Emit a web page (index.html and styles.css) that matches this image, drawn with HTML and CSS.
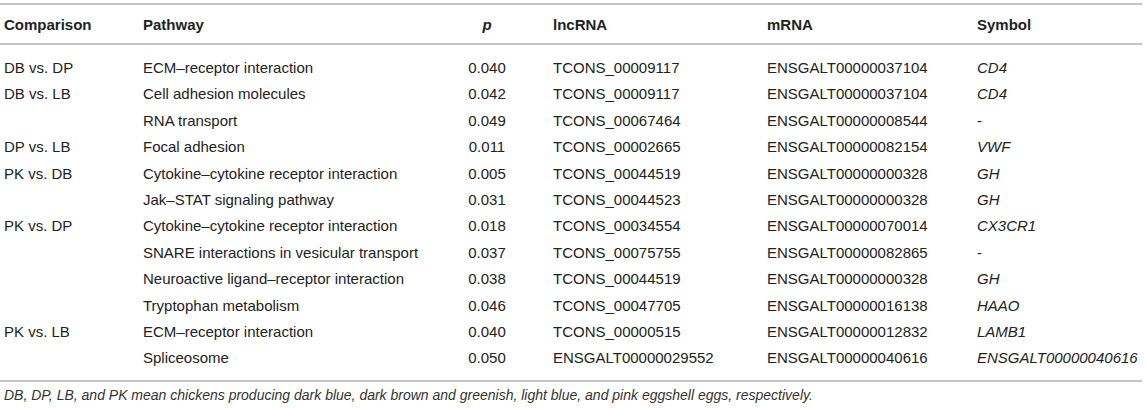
FILE: index.html
```html
<!DOCTYPE html>
<html>
<head>
<meta charset="utf-8">
<link rel="stylesheet" href="styles.css">
</head>
<body>
<div class="page">
<table class="data">
<colgroup>
<col class="c1"><col class="c2"><col class="c3"><col class="c4"><col class="c5"><col class="c6">
</colgroup>
<thead>
<tr><th class="first">Comparison</th><th>Pathway</th><th class="num"><i>p</i></th><th>lncRNA</th><th>mRNA</th><th>Symbol</th></tr>
</thead>
<tbody>
<tr class="top"><td class="first">DB vs. DP</td><td>ECM–receptor interaction</td><td class="num">0.040</td><td>TCONS_00009117</td><td>ENSGALT00000037104</td><td class="sym">CD4</td></tr>
<tr><td class="first">DB vs. LB</td><td>Cell adhesion molecules</td><td class="num">0.042</td><td>TCONS_00009117</td><td>ENSGALT00000037104</td><td class="sym">CD4</td></tr>
<tr><td class="first"></td><td>RNA transport</td><td class="num">0.049</td><td>TCONS_00067464</td><td>ENSGALT00000008544</td><td>-</td></tr>
<tr><td class="first">DP vs. LB</td><td>Focal adhesion</td><td class="num">0.011</td><td>TCONS_00002665</td><td>ENSGALT00000082154</td><td class="sym">VWF</td></tr>
<tr><td class="first">PK vs. DB</td><td>Cytokine–cytokine receptor interaction</td><td class="num">0.005</td><td>TCONS_00044519</td><td>ENSGALT00000000328</td><td class="sym">GH</td></tr>
<tr><td class="first"></td><td>Jak–STAT signaling pathway</td><td class="num">0.031</td><td>TCONS_00044523</td><td>ENSGALT00000000328</td><td class="sym">GH</td></tr>
<tr><td class="first">PK vs. DP</td><td>Cytokine–cytokine receptor interaction</td><td class="num">0.018</td><td>TCONS_00034554</td><td>ENSGALT00000070014</td><td class="sym">CX3CR1</td></tr>
<tr><td class="first"></td><td>SNARE interactions in vesicular transport</td><td class="num">0.037</td><td>TCONS_00075755</td><td>ENSGALT00000082865</td><td>-</td></tr>
<tr><td class="first"></td><td>Neuroactive ligand–receptor interaction</td><td class="num">0.038</td><td>TCONS_00044519</td><td>ENSGALT00000000328</td><td class="sym">GH</td></tr>
<tr><td class="first"></td><td>Tryptophan metabolism</td><td class="num">0.046</td><td>TCONS_00047705</td><td>ENSGALT00000016138</td><td class="sym">HAAO</td></tr>
<tr><td class="first">PK vs. LB</td><td>ECM–receptor interaction</td><td class="num">0.040</td><td>TCONS_00000515</td><td>ENSGALT00000012832</td><td class="sym">LAMB1</td></tr>
<tr class="bottom"><td class="first"></td><td>Spliceosome</td><td class="num">0.050</td><td>ENSGALT00000029552</td><td>ENSGALT00000040616</td><td class="sym">ENSGALT00000040616</td></tr>
</tbody>
</table>
<p class="note">DB, DP, LB, and PK mean chickens producing dark blue, dark brown and greenish, light blue, and pink eggshell eggs, respectively.</p>
</div>
</body>
</html>
```

FILE: styles.css
```css
html, body {
  margin: 0;
  padding: 0;
  background: #ffffff;
}
.page {
  padding-top: 3px;
  font-family: "Liberation Sans", Arial, sans-serif;
  color: #222222;
}
.data {
  width: 1142px;
  table-layout: fixed;
  border-collapse: collapse;
  font-size: 15px;
  border-top: 2px solid #c4c4c4;
  border-bottom: 2px solid #c4c4c4;
}
.c1 { width: 143px; }
.c2 { width: 278px; }
.c3 { width: 132px; }
.c4 { width: 214px; }
.c5 { width: 210px; }
.c6 { width: 165px; }
.data th, .data td {
  padding: 0;
  text-align: left;
  white-space: nowrap;
  vertical-align: middle;
}
.data th {
  height: 38px;
  font-weight: bold;
  border-bottom: 2px solid #c4c4c4;
}
.data td {
  height: 26.4px;
  line-height: 26.4px;
}
.data .first {
  padding-left: 4px;
}
.data .num {
  text-align: center;
}
.data .sym {
  font-style: italic;
}
.data tr.top td {
  padding-top: 10px;
}
.data tr.bottom td {
  padding-bottom: 8px;
}
.note {
  margin: 5px 0 0 4px;
  font-size: 14px;
  line-height: 17px;
  font-style: italic;
  color: #333333;
}
```
